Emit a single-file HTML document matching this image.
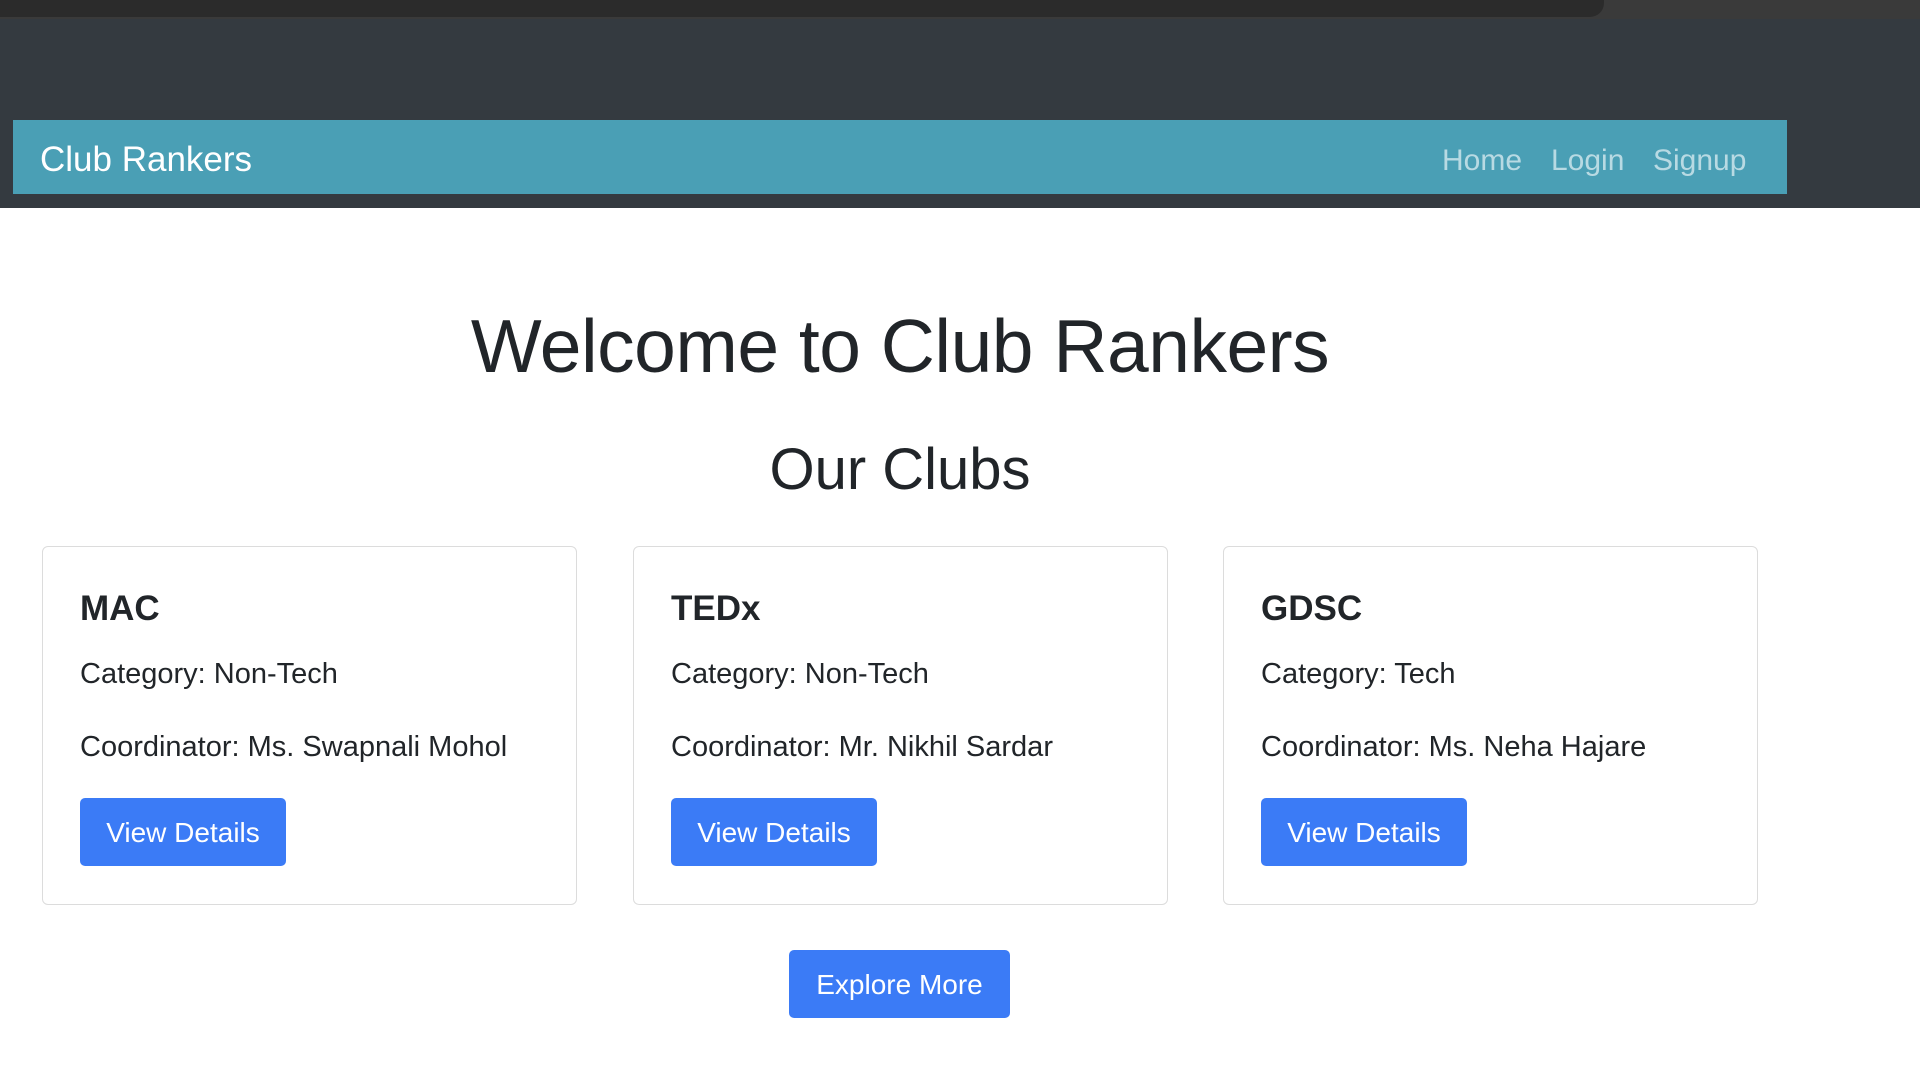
<!DOCTYPE html>
<html><head><meta charset="utf-8"><style>
*{box-sizing:border-box;margin:0;padding:0}
body{width:1920px;height:1080px;background:#fff;font-family:"Liberation Sans",sans-serif;color:#212529;position:relative;overflow:hidden}
.abs{position:absolute}
.top{left:0;top:0;width:1920px;height:208px;background:#343a40}
.chrome{left:0;top:0;width:1920px;height:19px;background:#3a3a3a}
.url{left:0;top:0;width:1604px;height:17px;background:#2b2b2b;border-radius:0 0 14px 0}
.nav{left:13px;top:120px;width:1774px;height:74px;background:#4a9fb5}
.brand{left:40px;top:140px;font-size:35px;color:#fff}
.link{top:144px;font-size:30px;color:#b8dae3}
h1{position:absolute;left:0;width:1800px;text-align:center;top:303px;font-size:75px;font-weight:500;letter-spacing:-0.5px}
h2{position:absolute;left:0;width:1800px;text-align:center;top:436px;font-size:58px;font-weight:500}
.card{top:546px;width:535px;height:359px;border:1px solid #dcdcdc;border-radius:6px}
.card .t{position:absolute;left:37px;top:42px;font-size:35px;font-weight:600}
.card .p{position:absolute;left:37px;font-size:29px;color:#212529}
.btn{position:absolute;background:#3b7bf6;color:#fff;border-radius:5px;font-size:28px;text-align:center}
.card .btn{left:37px;top:251px;width:206px;height:68px;line-height:70px}
</style></head><body>
<div class="abs top"></div>
<div class="abs chrome"></div>
<div class="abs url"></div>
<div class="abs nav"></div>
<div class="abs brand">Club Rankers</div>
<div class="abs link" style="left:1442px">Home</div>
<div class="abs link" style="left:1551px">Login</div>
<div class="abs link" style="left:1653px">Signup</div>
<h1>Welcome to Club Rankers</h1>
<h2>Our Clubs</h2>
<div class="abs card" style="left:42px"><div class="t">MAC</div><div class="p" style="top:111px">Category: Non-Tech</div><div class="p" style="top:184px">Coordinator: Ms. Swapnali Mohol</div><div class="btn">View Details</div></div>
<div class="abs card" style="left:633px"><div class="t">TEDx</div><div class="p" style="top:111px">Category: Non-Tech</div><div class="p" style="top:184px">Coordinator: Mr. Nikhil Sardar</div><div class="btn">View Details</div></div>
<div class="abs card" style="left:1223px"><div class="t">GDSC</div><div class="p" style="top:111px">Category: Tech</div><div class="p" style="top:184px">Coordinator: Ms. Neha Hajare</div><div class="btn">View Details</div></div>
<div class="btn" style="left:789px;top:950px;width:221px;height:68px;line-height:70px">Explore More</div>
</body></html>
